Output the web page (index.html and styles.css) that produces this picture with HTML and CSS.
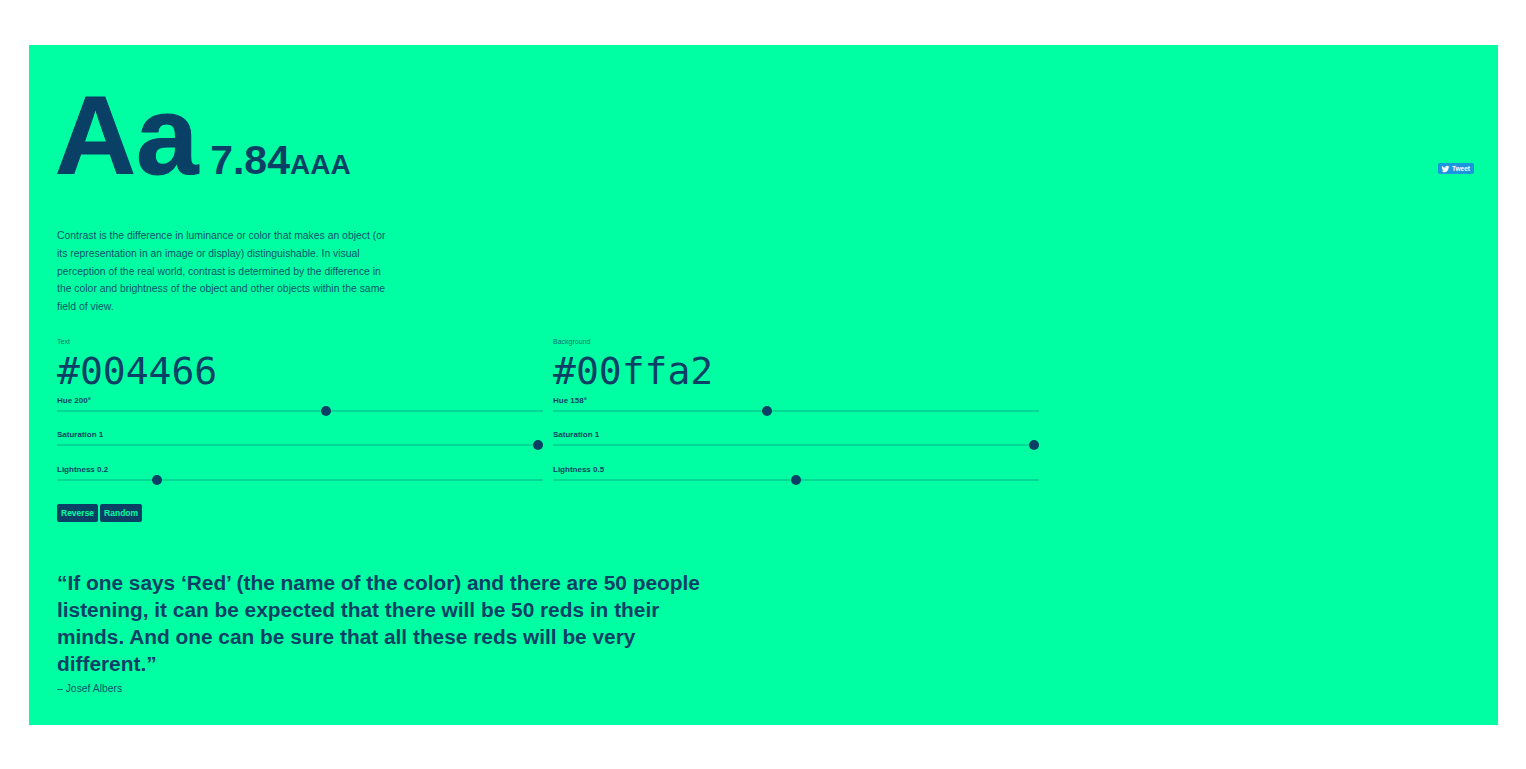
FILE: index.html
```html
<!DOCTYPE html>
<html lang="en">
<head>
<meta charset="utf-8">
<title>Contrast</title>
<link rel="stylesheet" href="styles.css">
</head>
<body>
<main class="panel">
  <header class="header">
    <div class="score">
      <span class="sample">Aa</span>
      <span class="ratio">7.84</span><span class="level">AAA</span>
    </div>
    <a class="tweet" href="#">
      <svg class="bird" viewBox="0 0 24 24" aria-hidden="true"><path d="M23.6 4.6c-.9.4-1.800.6-2.800.8 1-.6 1.800-1.500 2.100-2.700-.9.6-2 1-3.100 1.200A4.900 4.900 0 0 0 11.500 8.400 13.900 13.900 0 0 1 1.700 3.300a4.900 4.900 0 0 0 1.500 6.500c-.8 0-1.500-.2-2.200-.6v.1c0 2.400 1.700 4.400 3.900 4.800-.7.200-1.500.2-2.200.1.600 1.900 2.400 3.300 4.600 3.400A9.900 9.900 0 0 1 0 19.600a13.900 13.900 0 0 0 21.400-12.400c1-.7 1.800-1.600 2.200-2.600z"/></svg>
      <span>Tweet</span>
    </a>
  </header>

  <p class="intro">Contrast is the difference in luminance or color that makes an object (or its representation in an image or display) distinguishable. In visual perception of the real world, contrast is determined by the difference in the color and brightness of the object and other objects within the same field of view.</p>

  <section class="controls">
    <div class="group">
      <div class="caption">Text</div>
      <div class="hex">#004466</div>
      <label class="field"><span class="field-label">Hue 200°</span><input class="slider" type="range" min="0" max="360" value="200"></label>
      <label class="field"><span class="field-label">Saturation 1</span><input class="slider" type="range" min="0" max="1" step="0.01" value="1"></label>
      <label class="field"><span class="field-label">Lightness 0.2</span><input class="slider" type="range" min="0" max="1" step="0.01" value="0.2"></label>
    </div>
    <div class="group">
      <div class="caption">Background</div>
      <div class="hex">#00ffa2</div>
      <label class="field"><span class="field-label">Hue 158°</span><input class="slider" type="range" min="0" max="360" value="158"></label>
      <label class="field"><span class="field-label">Saturation 1</span><input class="slider" type="range" min="0" max="1" step="0.01" value="1"></label>
      <label class="field"><span class="field-label">Lightness 0.5</span><input class="slider" type="range" min="0" max="1" step="0.01" value="0.5"></label>
    </div>
  </section>

  <div class="actions">
    <button class="btn" type="button">Reverse</button>
    <button class="btn" type="button">Random</button>
  </div>

  <blockquote class="quote">
    <p class="quote-text">“If one says ‘Red’ (the name of the color) and there are 50 people listening, it can be expected that there will be 50 reds in their minds. And one can be sure that all these reds will be very different.”</p>
    <footer class="quote-by">– Josef Albers</footer>
  </blockquote>
</main>
</body>
</html>
```

FILE: styles.css
```css
* { box-sizing: border-box; }

html, body { margin: 0; height: 100%; }

body {
  background: #fff;
  padding: 45px 28px 44px 29px;
  font-family: "Liberation Sans", Arial, sans-serif;
  color: #0a3f66;
}

.panel {
  background: #00ffa2;
  height: 680px;
  padding: 42px 24px 0 28px;
}

.header {
  display: flex;
  justify-content: space-between;
  align-items: flex-end;
  height: 97px;
}

.score {
  font-weight: 700;
  white-space: nowrap;
  display: flex;
  align-items: baseline;
  height: 97px;
}

.sample {
  font-size: 112px;
  line-height: 97px;
  margin: 0 12px 0 -2px;
  -webkit-text-stroke: 1px #0a3f66;
}
.ratio { font-size: 41px; line-height: 1; }
.level { font-size: 28px; line-height: 1; }

.tweet {
  display: flex;
  align-items: center;
  gap: 2px;
  width: 36px;
  height: 11px;
  margin-bottom: 10px;
  padding-left: 3px;
  background: #1b95e0;
  border-radius: 2px;
  color: #fff;
  font-size: 6.5px;
  font-weight: 700;
  text-decoration: none;
}

.bird { width: 9px; height: 8px; fill: #fff; flex: none; }

.intro {
  width: 340px;
  margin: 43px 0 0;
  font-size: 10.4px;
  line-height: 17.8px;
  opacity: .9;
}

.controls {
  display: flex;
  gap: 10px;
  margin-top: 21px;
}

.group { width: 486px; }

.caption {
  font-size: 7px;
  line-height: 10px;
  opacity: .75;
}

.hex {
  font-family: "DejaVu Sans Mono", monospace;
  font-size: 38px;
  line-height: 44px;
  margin: 2px 0 3px;
}

.field { display: block; height: 34.5px; }

.field-label {
  display: block;
  font-size: 8px;
  font-weight: 700;
  line-height: 10px;
}

.slider {
  display: block;
  appearance: none;
  -webkit-appearance: none;
  width: 100%;
  height: 10px;
  margin: 0;
  background: transparent;
}

.slider::-webkit-slider-runnable-track {
  height: 2px;
  background: rgba(10, 63, 102, .2);
}

.slider::-webkit-slider-thumb {
  -webkit-appearance: none;
  width: 10px;
  height: 10px;
  margin-top: -4px;
  border-radius: 50%;
  background: #0a3f66;
}

.actions {
  display: flex;
  gap: 2px;
  margin-top: 5px;
}

.btn {
  height: 18px;
  padding: 0 4px;
  border: 0;
  border-radius: 2px;
  background: #0a3f66;
  color: #00ffa2;
  font: 700 8.5px "Liberation Sans", Arial, sans-serif;
}

.quote { margin: 48px 0 0; width: 660px; }

.quote-text {
  margin: 0;
  font-size: 20.85px;
  font-weight: 700;
  line-height: 26.7px;
}

.quote-by {
  margin-top: 5px;
  font-size: 10.4px;
  line-height: 14px;
  opacity: .9;
}
```
